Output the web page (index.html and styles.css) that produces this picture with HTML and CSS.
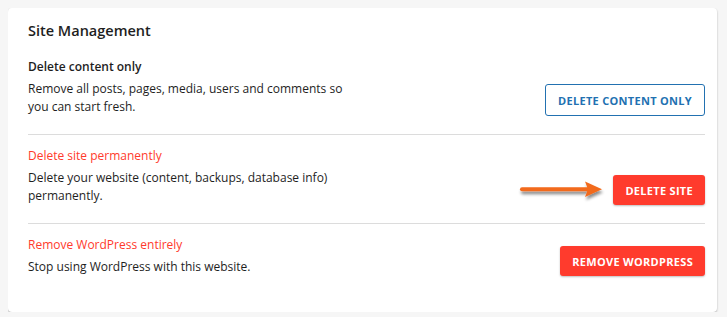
FILE: index.html
```html
<!DOCTYPE html>
<html lang="en">
<head>
    <meta charset="UTF-8">
    <meta name="viewport" content="width=device-width, initial-scale=1.0">
    <title>Site Management</title>
    <link rel="stylesheet" href="styles.css">
</head>
<body>
    <div class="card">
        <h2>Site Management</h2>

        <!-- Delete content -->
        <div class="row">
            <div class="info">
                <h3>Delete content only</h3>
                <p>Remove all posts, pages, media, users and comments so<br>you can start fresh.</p>
            </div>
            <button class="btn btn-outline">Delete content only</button>
        </div>

        <!-- Delete site -->
        <div class="row">
            <div class="info">
                <h3 class="danger">Delete site permanently</h3>
                <p>Delete your website (content, backups, database info)<br>permanently.</p>
            </div>
            <div class="btn-wrap">
                <svg class="arrow" width="90" height="24" viewBox="0 0 90 24">
                    <defs>
                        <filter id="sh" x="-10%" y="-50%" width="120%" height="200%">
                            <feDropShadow dx="1" dy="3" stdDeviation="1.5" flood-color="#000" flood-opacity="0.45"/>
                        </filter>
                    </defs>
                    <g filter="url(#sh)">
                        <rect x="2" y="8.2" width="70" height="4" rx="2" fill="#f26a1b"/>
                        <path d="M67 2.5 L84 10.2 L67 18 L70 10.2 Z" fill="#f26a1b"/>
                    </g>
                </svg>
                <button class="btn btn-red">Delete site</button>
            </div>
        </div>

        <!-- Remove WordPress -->
        <div class="row">
            <div class="info">
                <h3 class="danger">Remove WordPress entirely</h3>
                <p>Stop using WordPress with this website.</p>
            </div>
            <button class="btn btn-red">Remove WordPress</button>
        </div>
    </div>
</body>
</html>
```

FILE: styles.css
```css
body {
    margin: 8px;
    background-color: #f6f6f6;
    font-family: "Open Sans", "Noto Sans", sans-serif;
    color: #1e1e1e;
}
.card {
    box-sizing: border-box;
    width: 709px;
    padding: 12px 12px 18px 20px;
    background-color: #fff;
    border-radius: 4px;
    box-shadow: 0 1px 2px rgba(0, 0, 0, 0.3);
}
h2 {
    margin: 0 0 4px 0;
    font-size: 14.5px;
    line-height: 22px;
    font-weight: 600;
}
.row {
    display: flex;
    justify-content: space-between;
    align-items: flex-end;
    padding: 12px 0 18px 0;
    border-bottom: 1px solid #dcdcdc;
}
.row:last-child {
    border-bottom: none;
}
h3 {
    margin: 0;
    font-size: 12px;
    line-height: 18px;
    font-weight: 600;
}
h3.danger {
    color: #ff3a2c;
    font-weight: 500;
}
p {
    margin: 4px 0 0 0;
    font-size: 12px;
    line-height: 18px;
}
.btn {
    height: 30px;
    padding: 0 12px;
    border-radius: 3px;
    font-family: inherit;
    font-size: 11px;
    font-weight: 700;
    letter-spacing: 0.3px;
    text-transform: uppercase;
    cursor: pointer;
}
.btn-outline {
    height: 32px;
    padding: 0 12px;
    background-color: #fff;
    color: #2271b1;
    border: 1px solid #2271b1;
}
.btn-red {
    background-color: #ff3b2d;
    color: #fff;
    border: none;
    box-shadow: 0 1px 2px rgba(0, 0, 0, 0.25);
}
.btn-wrap {
    position: relative;
}
.arrow {
    position: absolute;
    right: 100%;
    top: 4px;
    margin-right: 5px;
}
```
